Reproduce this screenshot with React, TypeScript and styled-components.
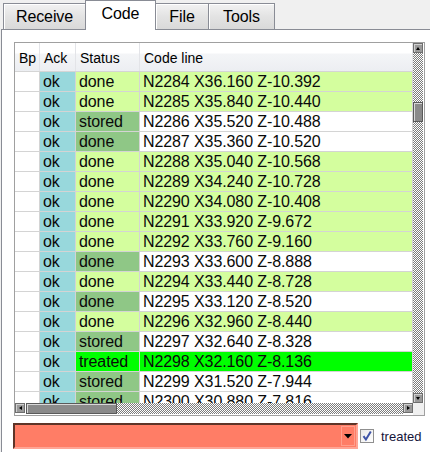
import React from "react";
import styled, { createGlobalStyle } from "styled-components";

const GlobalStyle = createGlobalStyle`
  html, body {
    margin: 0;
    padding: 0;
    background: #f0f0f0;
  }
  body {
    font-family: "Liberation Sans", Arial, sans-serif;
  }
`;

type Kind = "light" | "dark" | "treated";

const rows: { n: string; x: string; z: string; status: string; kind: Kind }[] = [
  { n: "2284", x: "36.160", z: "-10.392", status: "done", kind: "light" },
  { n: "2285", x: "35.840", z: "-10.440", status: "done", kind: "light" },
  { n: "2286", x: "35.520", z: "-10.488", status: "stored", kind: "dark" },
  { n: "2287", x: "35.360", z: "-10.520", status: "done", kind: "dark" },
  { n: "2288", x: "35.040", z: "-10.568", status: "done", kind: "light" },
  { n: "2289", x: "34.240", z: "-10.728", status: "done", kind: "light" },
  { n: "2290", x: "34.080", z: "-10.408", status: "done", kind: "light" },
  { n: "2291", x: "33.920", z: "-9.672", status: "done", kind: "light" },
  { n: "2292", x: "33.760", z: "-9.160", status: "done", kind: "light" },
  { n: "2293", x: "33.600", z: "-8.888", status: "done", kind: "dark" },
  { n: "2294", x: "33.440", z: "-8.728", status: "done", kind: "light" },
  { n: "2295", x: "33.120", z: "-8.520", status: "done", kind: "dark" },
  { n: "2296", x: "32.960", z: "-8.440", status: "done", kind: "light" },
  { n: "2297", x: "32.640", z: "-8.328", status: "stored", kind: "dark" },
  { n: "2298", x: "32.160", z: "-8.136", status: "treated", kind: "treated" },
  { n: "2299", x: "31.520", z: "-7.944", status: "stored", kind: "dark" },
  { n: "2300", x: "30.880", z: "-7.816", status: "stored", kind: "dark" },
];

const statusColor = { light: "#d4fe9e", dark: "#8fc786", treated: "#00ff00" };
const codeColor = { light: "#d4fe9e", dark: "#ffffff", treated: "#00ff00" };

function App() {
  return (
    <Window>
      <GlobalStyle />
      <TabStrip>
        <Tab style={{ width: 83 }}>Receive</Tab>
        <ActiveTab>Code</ActiveTab>
        <Tab style={{ width: 54 }}>File</Tab>
        <Tab style={{ width: 67 }}>Tools</Tab>
      </TabStrip>
      <Panel>
        <GridBox>
          <Content>
            <HeaderRow>
              <HeadCell>Bp</HeadCell>
              <HeadCell>Ack</HeadCell>
              <HeadCell>Status</HeadCell>
              <HeadCell>Code line</HeadCell>
            </HeaderRow>
            {rows.map((r) => (
              <Row key={r.n}>
                <Cell $bg="#ffffff" />
                <Cell $bg="#98d8dc">ok</Cell>
                <Cell $bg={statusColor[r.kind]}>{r.status}</Cell>
                <Cell $bg={codeColor[r.kind]}>
                  N{r.n} X{r.x} Z{r.z}
                </Cell>
              </Row>
            ))}
          </Content>
          <VScroll>
            <ArrowButton>
              <Tri dir="up" />
            </ArrowButton>
            <VTrack>
              <VThumb />
            </VTrack>
            <ArrowButton>
              <Tri dir="down" />
            </ArrowButton>
          </VScroll>
          <HScroll>
            <ArrowButton>
              <Tri dir="left" />
            </ArrowButton>
            <HThumb />
            <HTrack />
            <ArrowButton>
              <Tri dir="right" />
            </ArrowButton>
          </HScroll>
          <Corner />
        </GridBox>
        <BottomRow>
          <Combo>
            <ComboText />
            <DropButton>
              <svg width="8" height="5" viewBox="0 0 8 5">
                <path d="M0 0h8L4 4.5z" fill="#000" />
              </svg>
            </DropButton>
          </Combo>
          <CheckBox>
            <svg width="12" height="12" viewBox="0 0 12 12">
              <path
                d="M2.5 6.2l2.4 3.3L9.8 1.5"
                fill="none"
                stroke="#3d52a6"
                strokeWidth="2"
              />
            </svg>
          </CheckBox>
          <CheckLabel>treated</CheckLabel>
        </BottomRow>
      </Panel>
    </Window>
  );
}

function Tri({ dir }: { dir: "up" | "down" | "left" | "right" }) {
  const d = {
    up: "M1 5h4L3 2z",
    down: "M1 2h4L3 5z",
    left: "M5 1v4L2 3z",
    right: "M2 1v4l3-2z",
  }[dir];
  return (
    <svg width="6" height="6" viewBox="0 0 6 6">
      <path d={d} fill="#000" />
    </svg>
  );
}

export default App;

const Window = styled.div`
  width: 430px;
  height: 452px;
  overflow: hidden;
  display: flex;
  flex-direction: column;
  background: #f0f0f0;
`;

const TabStrip = styled.div`
  display: flex;
  align-items: flex-end;
  height: 29px;
  padding-left: 3px;
`;

const Tab = styled.div`
  box-sizing: border-box;
  height: 26px;
  border: 1px solid #898c95;
  border-bottom: none;
  margin-right: -1px;
  background: linear-gradient(#f2f2f2, #e3e3e3 50%, #d9d9d9);
  box-shadow: inset 1px 1px 0 #ffffff;
  font-size: 16px;
  color: #000;
  display: flex;
  align-items: center;
  justify-content: center;
  letter-spacing: -0.1px;
`;

const ActiveTab = styled(Tab)`
  position: relative;
  z-index: 1;
  width: 71px;
  height: 30px;
  margin-bottom: -1px;
  margin-left: 0;
  background: #ffffff;
  box-shadow: none;
  padding-bottom: 3px;
`;

const Panel = styled.div`
  flex: 1;
  margin-left: 1px;
  border-top: 1px solid #898c95;
  border-left: 1px solid #898c95;
  background: #ffffff;
  padding: 12px 0 0 12px;
`;

const GridBox = styled.div`
  box-sizing: border-box;
  width: 411px;
  height: 374px;
  border: 1px solid #a0a0a0;
  display: grid;
  grid-template-columns: 398px 11px;
  grid-template-rows: 360px 12px;
  background: #ffffff;
`;

const Content = styled.div`
  overflow: hidden;
`;

const columns = "25px 36px 64px 1fr";

const HeaderRow = styled.div`
  display: grid;
  grid-template-columns: ${columns};
  height: 29px;
  background: linear-gradient(#ffffff 0, #ffffff 10px, #f4f5f7 11px, #eceef2);
  border-bottom: 1px solid #d5d5d5;
  box-sizing: border-box;
`;

const HeadCell = styled.div`
  font-size: 14px;
  color: #000;
  padding: 5px 0 0 4px;
  border-right: 1px solid #e3e4e8;
  line-height: 20px;
  white-space: nowrap;
`;

const Row = styled.div`
  display: grid;
  grid-template-columns: ${columns};
  height: 20px;
`;

const Cell = styled.div<{ $bg: string }>`
  background: ${(p) => p.$bg};
  border-right: 1px solid #d4d4d4;
  border-bottom: 1px solid #d4d4d4;
  font-size: 16px;
  letter-spacing: -0.1px;
  line-height: 19px;
  padding-left: 3px;
  color: #0a0a0a;
  white-space: nowrap;
  overflow: hidden;
`;

const checker = `
  background-color: #ffffff;
  background-image: repeating-conic-gradient(#7c7c7c 0 25%, #ffffff 0 50%);
  background-size: 2px 2px;
`;

const VScroll = styled.div`
  display: flex;
  flex-direction: column;
  width: 10px;
`;

const VTrack = styled.div`
  flex: 1;
  ${checker}
  display: flex;
  flex-direction: column;
`;

const Thumb = styled.div`
  box-sizing: border-box;
  background: #8a8a8a;
  border: 1px solid #5a5a5a;
  box-shadow: inset 1px 1px 0 #d8d8d8;
`;

const VThumb = styled(Thumb)`
  margin-top: 49px;
  height: 20px;
`;

const HScroll = styled.div`
  display: flex;
  height: 11px;
`;

const HThumb = styled(Thumb)`
  width: 91px;
  margin-left: 1px;
`;

const HTrack = styled.div`
  flex: 1;
  ${checker}
`;

const ArrowButton = styled.div`
  box-sizing: border-box;
  width: 10px;
  height: 10px;
  flex: none;
  background: #9a9a9a;
  border: 1px solid #6e6e6e;
  box-shadow: inset 1px 1px 0 #d0d0d0;
  display: flex;
  align-items: center;
  justify-content: center;
  svg {
    display: block;
  }
`;

const Corner = styled.div`
  background: #f0f0f0;
`;

const BottomRow = styled.div`
  display: flex;
  align-items: center;
  margin-top: 7px;
  margin-left: -1px;
`;

const Combo = styled.div`
  box-sizing: border-box;
  width: 345px;
  height: 26px;
  background: #ff7d66;
  border: 2px solid;
  border-color: #5e3428 #ffa595 #ffa595 #5e3428;
  display: flex;
  align-items: stretch;
  padding: 1px;
`;

const ComboText = styled.div`
  flex: 1;
`;

const DropButton = styled.div`
  width: 14px;
  display: flex;
  align-items: center;
  justify-content: center;
  border: 1px solid #ff9e8c;
  box-sizing: border-box;
`;

const CheckBox = styled.div`
  box-sizing: border-box;
  width: 14px;
  height: 14px;
  margin-left: 2px;
  border: 1px solid #8f8f8f;
  background: linear-gradient(135deg, #e8e8e8, #ffffff);
  display: flex;
  align-items: center;
  justify-content: center;
`;

const CheckLabel = styled.span`
  margin-left: 7px;
  font-size: 13px;
  color: #14143a;
`;
